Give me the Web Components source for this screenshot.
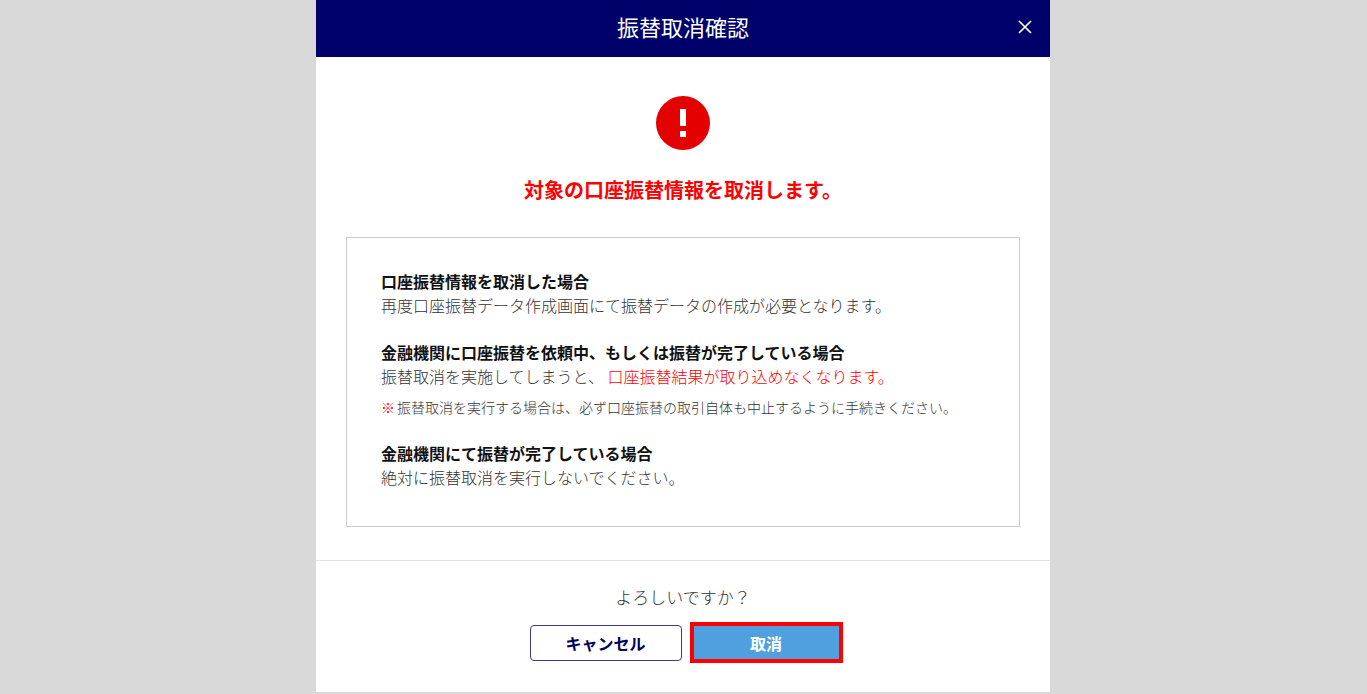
<!DOCTYPE html>
<html lang="ja">
<head>
<meta charset="utf-8">
<meta name="viewport" content="width=device-width, initial-scale=1">
<title>振替取消確認</title>
<style>
body { margin: 0; padding-right: 1px; background: #d9d9d9; color: #333; font: 300 16px/24px "Noto Sans CJK JP", sans-serif; }
</style>
</head>
<body>
<confirm-dialog>
  <span slot="title">振替取消確認</span>
  <alert-message>対象の口座振替情報を取消します。</alert-message>
  <notice-box>
    <notice-item>
      <span slot="heading">口座振替情報を取消した場合</span>
      再度口座振替データ作成画面にて振替データの作成が必要となります。
    </notice-item>
    <notice-item>
      <span slot="heading">金融機関に口座振替を依頼中、もしくは振替が完了している場合</span>
      振替取消を実施してしまうと、<warning-text>口座振替結果が取り込めなくなります。</warning-text><foot-note slot="note">振替取消を実行する場合は、必ず口座振替の取引自体も中止するように手続きください。</foot-note>
    </notice-item>
    <notice-item>
      <span slot="heading">金融機関にて振替が完了している場合</span>
      絶対に振替取消を実行しないでください。
    </notice-item>
  </notice-box>
  <span slot="question">よろしいですか？</span>
  <dialog-button slot="actions">キャンセル</dialog-button>
  <dialog-button slot="actions" primary>取消</dialog-button>
</confirm-dialog>

<script>
const define = (name, html) => {
  const template = document.createElement('template');
  template.innerHTML = html;
  customElements.define(name, class extends HTMLElement {
    constructor() {
      super();
      this.attachShadow({ mode: 'open' }).append(template.content.cloneNode(true));
    }
  });
};

define('confirm-dialog', `
<style>
  :host { display: block; max-width: 734px; margin: 0 auto; background: #fff; }
  header { display: grid; grid-template-columns: 50px 1fr 50px; align-items: start; background: #00006a; color: #fff; }
  h1 { grid-column: 2; margin: 0; padding: 10px 0 15px; font-size: 22px; line-height: 32px; font-weight: 400; text-align: center; }
  button { display: flex; align-items: center; justify-content: center; height: 53px; padding: 0; border: 0; background: none; color: inherit; cursor: pointer; }
  main { padding: 39px 30px 33px; }
  footer { padding: 24px 30px 29px; border-top: 1px solid #e3e3e3; text-align: center; }
  p { margin: 0 0 13px; font-size: 17px; line-height: 24px; }
  .actions { display: flex; flex-wrap: wrap; justify-content: center; align-items: center; gap: 8px; padding-left: 6px; }
</style>
<section role="dialog" aria-labelledby="title">
  <header>
    <h1 id="title"><slot name="title"></slot></h1>
    <button type="button" aria-label="閉じる">
      <svg width="14" height="14" viewBox="0 0 14 14" fill="none" stroke="currentColor" stroke-width="1.7" aria-hidden="true"><path d="M1 1l12 12M13 1L1 13"/></svg>
    </button>
  </header>
  <main><slot></slot></main>
  <footer>
    <p><slot name="question"></slot></p>
    <div class="actions"><slot name="actions"></slot></div>
  </footer>
</section>`);

define('alert-message', `
<style>
  :host { display: flex; flex-direction: column; align-items: center; gap: 25px; margin-bottom: 32px; }
  h2 { margin: 0; color: #f00; font-size: 20px; line-height: 30px; font-weight: 700; }
  svg { display: block; }
</style>
<svg width="54" height="54" viewBox="0 0 54 54" aria-hidden="true"><circle cx="27" cy="27" r="27" fill="#e50000"/><path fill="#fff" d="M24 13h6v17h-6zM24 35h6v6h-6z"/></svg>
<h2><slot></slot></h2>`);

define('notice-box', `
<style>
  :host { display: flex; flex-direction: column; gap: 22px; padding: 31px 34px 36px; border: 1px solid #ccc; }
</style>
<slot></slot>`);

define('notice-item', `
<style>
  :host { display: block; }
  h3 { margin: 0; color: #111; font-size: 16px; line-height: 24px; font-weight: 700; }
  p { margin: 0; font-size: 16px; line-height: 25px; }
</style>
<h3><slot name="heading"></slot></h3>
<p><slot></slot></p>
<slot name="note"></slot>`);

define('warning-text', `
<style>:host { color: #f00; }</style><slot></slot>`);

define('foot-note', `
<style>
  :host { display: flex; gap: 2px; margin-top: 6px; font-size: 14px; line-height: 24px; }
  b { color: #f00; font-weight: 700; }
</style>
<b>※</b><span><slot></slot></span>`);

define('dialog-button', `
<style>
  :host { display: block; }
  button { width: 152px; height: 36px; padding: 0; border: 1px solid #3a3a8c; border-radius: 4px; background: #fff; color: #00005c; font: inherit; font-size: 16px; font-weight: 700; cursor: pointer; }
  :host([primary]) button { width: 153px; height: 41px; border: 4px solid #f00; border-radius: 0; background: #509fdf; color: #fff; }
</style>
<button type="button"><slot></slot></button>`);
</script>
</body>
</html>
